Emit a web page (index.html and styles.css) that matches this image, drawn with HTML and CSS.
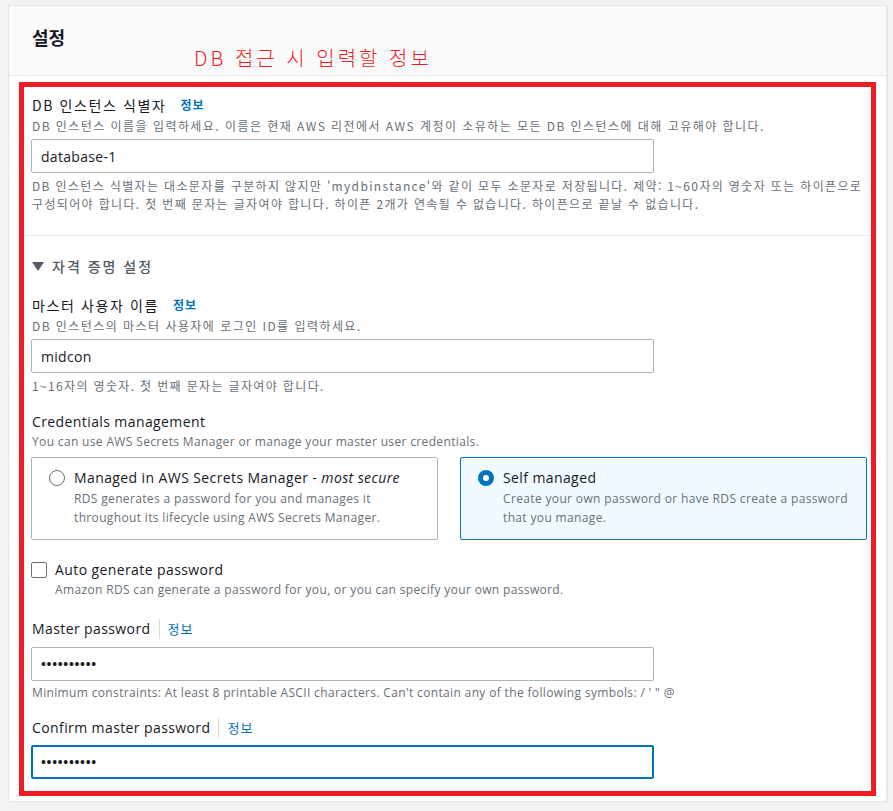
FILE: index.html
```html
<!DOCTYPE html>
<html lang="ko">
<head>
  <meta charset="utf-8">
  <title>설정</title>
  <link rel="stylesheet" href="styles.css">
</head>
<body>
  <!-- settings panel -->
  <div class="panel">
    <div class="panel-header">
      <h2 class="panel-title">설정</h2>
      <div class="note">DB 접근 시 입력할 정보</div>
    </div>

    <div class="highlight">
      <div class="field first">
        <div class="label ko">DB 인스턴스 식별자 <a class="info">정보</a></div>
        <div class="desc">DB 인스턴스 이름을 입력하세요. 이름은 현재 AWS 리전에서 AWS 계정이 소유하는 모든 DB 인스턴스에 대해 고유해야 합니다.</div>
        <input class="text-input" type="text" value="database-1">
        <div class="help">DB 인스턴스 식별자는 대소문자를 구분하지 않지만 'mydbinstance'와 같이 모두 소문자로 저장됩니다. 제약: 1~60자의 영숫자 또는 하이픈으로 구성되어야 합니다. 첫 번째 문자는 글자여야 합니다. 하이픈 2개가 연속될 수 없습니다. 하이픈으로 끝날 수 없습니다.</div>
      </div>

      <hr class="divider">

      <div class="section">
        <div class="expander"><span class="caret"></span>자격 증명 설정</div>

        <div class="field">
          <div class="label ko">마스터 사용자 이름 <a class="info">정보</a></div>
          <div class="desc">DB 인스턴스의 마스터 사용자에 로그인 ID를 입력하세요.</div>
          <input class="text-input" type="text" value="midcon">
          <div class="help">1~16자의 영숫자. 첫 번째 문자는 글자여야 합니다.</div>
        </div>

        <div class="field creds">
          <div class="label en">Credentials management</div>
          <div class="desc en">You can use AWS Secrets Manager or manage your master user credentials.</div>
          <div class="tiles">
            <div class="tile">
              <span class="radio"></span>
              <div>
                <div class="tile-title">Managed in AWS Secrets Manager - <em>most secure</em></div>
                <div class="tile-desc">RDS generates a password for you and manages it throughout its lifecycle using AWS Secrets Manager.</div>
              </div>
            </div>
            <div class="tile selected">
              <span class="radio on"></span>
              <div>
                <div class="tile-title">Self managed</div>
                <div class="tile-desc">Create your own password or have RDS create a password that you manage.</div>
              </div>
            </div>
          </div>
        </div>

        <div class="check-row">
          <span class="checkbox"></span>
          <div>
            <div class="check-label">Auto generate password</div>
            <div class="desc en">Amazon RDS can generate a password for you, or you can specify your own password.</div>
          </div>
        </div>

        <div class="field pw">
          <div class="label en">Master password<span class="sep"></span><a class="info">정보</a></div>
          <input class="text-input secret" type="text" value="••••••••••">
          <div class="help en">Minimum constraints: At least 8 printable ASCII characters. Can't contain any of the following symbols: / ' " @</div>
        </div>

        <div class="field pw last">
          <div class="label en">Confirm master password<span class="sep"></span><a class="info">정보</a></div>
          <input class="text-input secret focused" type="text" value="••••••••••">
        </div>
      </div>
    </div>
  </div>
  <!-- end of panel -->
</body>
</html>
```

FILE: styles.css
```css
body {
  margin: 5px 0 0 8px;
  background-color: #f2f3f3;
  font-family: "Open Sans", "Noto Sans CJK KR", sans-serif;
  color: #16191f;
  font-size: 14px;
  letter-spacing: 0.4px;
}
.panel {
  width: 877px;
  background-color: #fff;
  border: 1px solid #e3e6e6;
  box-shadow: 0 1px 1px rgba(0, 28, 36, 0.25);
  padding-bottom: 5px;
}
.panel-header {
  box-sizing: border-box;
  height: 70px;
  padding-left: 23px;
  background-color: #fafafa;
  border-bottom: 1px solid #eaeded;
}
.panel-title {
  margin: 0;
  padding-top: 19px;
  font-family: "Noto Sans CJK KR", sans-serif;
  font-size: 18px;
  font-weight: 700;
  line-height: 24px;
  letter-spacing: 0;
}
.note {
  margin: -3px 0 0 162px;
  font-family: "Noto Sans CJK KR", sans-serif;
  font-weight: 300;
  font-size: 20px;
  line-height: 24px;
  letter-spacing: 3px;
  color: #ee1c25;
}
.highlight {
  margin: 6px 10px 0 10px;
  border: 5px solid #ee1c25;
  padding: 6px 4px 12px 7px;
}
.label {
  display: flex;
  align-items: center;
  padding-left: 1px;
  font-family: "Noto Sans CJK KR", sans-serif;
  font-size: 14px;
  line-height: 20px;
  letter-spacing: 1.6px;
}
.label.ko {
  padding-top: 2px;
}
.desc,
.help {
  padding-left: 1px;
  font-family: "Noto Sans CJK KR", sans-serif;
  font-size: 12px;
  line-height: 18px;
  letter-spacing: 1.45px;
  color: #687078;
}
.help {
  letter-spacing: 1.35px;
}
.label.en,
.desc.en,
.help.en {
  font-family: "Open Sans", "Noto Sans CJK KR", sans-serif;
}
.label.en {
  letter-spacing: 0.4px;
}
.desc.en,
.help.en {
  letter-spacing: 0.35px;
}
.info {
  margin-left: 14px;
  color: #0073bb;
  font-family: "Noto Sans CJK KR", sans-serif;
  font-size: 12px;
  font-weight: 700;
  letter-spacing: 1px;
}
.sep {
  width: 1px;
  height: 20px;
  margin: 0 8px 0 8px;
  background-color: #d5dbdb;
}
.sep + .info {
  margin-left: 0;
  font-size: 13px;
  font-weight: 400;
}
.field .desc {
  margin-top: 2px;
}
.text-input {
  display: block;
  box-sizing: border-box;
  width: 623px;
  height: 34px;
  margin-top: 4px;
  padding: 0 9px;
  border: 1px solid #aab7b8;
  border-radius: 2px;
  font-family: "Open Sans", sans-serif;
  font-size: 14px;
  letter-spacing: 0.3px;
  color: #16191f;
}
.text-input.secret {
  font-size: 13px;
  font-weight: 700;
  letter-spacing: 0.7px;
}
.text-input.focused {
  border: 2px solid #0073bb;
  padding-left: 8px;
}
.help {
  margin-top: 4px;
}
.divider {
  margin: 22px -4px 0 -7px;
  border: 0;
  border-top: 1px solid #eaeded;
}
.expander {
  display: flex;
  align-items: center;
  margin-top: 20px;
  padding-left: 1px;
  font-family: "Noto Sans CJK KR", sans-serif;
  font-size: 14px;
  font-weight: 500;
  line-height: 20px;
  letter-spacing: 2px;
  color: #545b64;
}
.caret {
  width: 0;
  height: 0;
  margin-right: 8px;
  border-left: 6px solid transparent;
  border-right: 6px solid transparent;
  border-top: 9px solid #545b64;
}
.section > .field {
  margin-top: 17px;
}
.section > .field.creds {
  margin-top: 17px;
}
.creds .desc {
  margin-top: 1px;
}
.creds .tiles {
  margin-top: 6px;
}
.tiles {
  display: grid;
  grid-template-columns: 1fr 1fr;
  gap: 22px;
}
.tile {
  display: flex;
  align-items: flex-start;
  border: 1px solid #aab7b8;
  border-radius: 2px;
  padding: 10px 10px 12px 17px;
}
.tile.selected {
  border-color: #0073bb;
  background-color: #f1faff;
}
.radio {
  flex: none;
  box-sizing: border-box;
  width: 16px;
  height: 16px;
  margin: 2px 9px 0 0;
  border: 1px solid #687078;
  border-radius: 50%;
  background-color: #fff;
}
.radio.on {
  border: 5px solid #0073bb;
}
.tile-title {
  line-height: 20px;
}
.tile-desc {
  margin-top: 1px;
  font-size: 12px;
  line-height: 19px;
  letter-spacing: 0.35px;
  color: #687078;
}
.check-row {
  display: flex;
  align-items: flex-start;
  margin-top: 20px;
}
.checkbox {
  flex: none;
  box-sizing: border-box;
  width: 16px;
  height: 16px;
  margin: 2px 8px 0 0;
  border: 1px solid #687078;
  border-radius: 2px;
  background-color: #fff;
}
.check-label {
  line-height: 20px;
}
.check-row .desc {
  margin-top: 1px;
  padding-left: 0;
}
.section > .field.pw {
  margin-top: 20px;
}
.section > .field.pw.last {
  margin-top: 16px;
}
.pw .text-input {
  margin-top: 8px;
}
.pw .help {
  margin-top: 3px;
}
.last .text-input {
  margin-top: 7px;
}
```
